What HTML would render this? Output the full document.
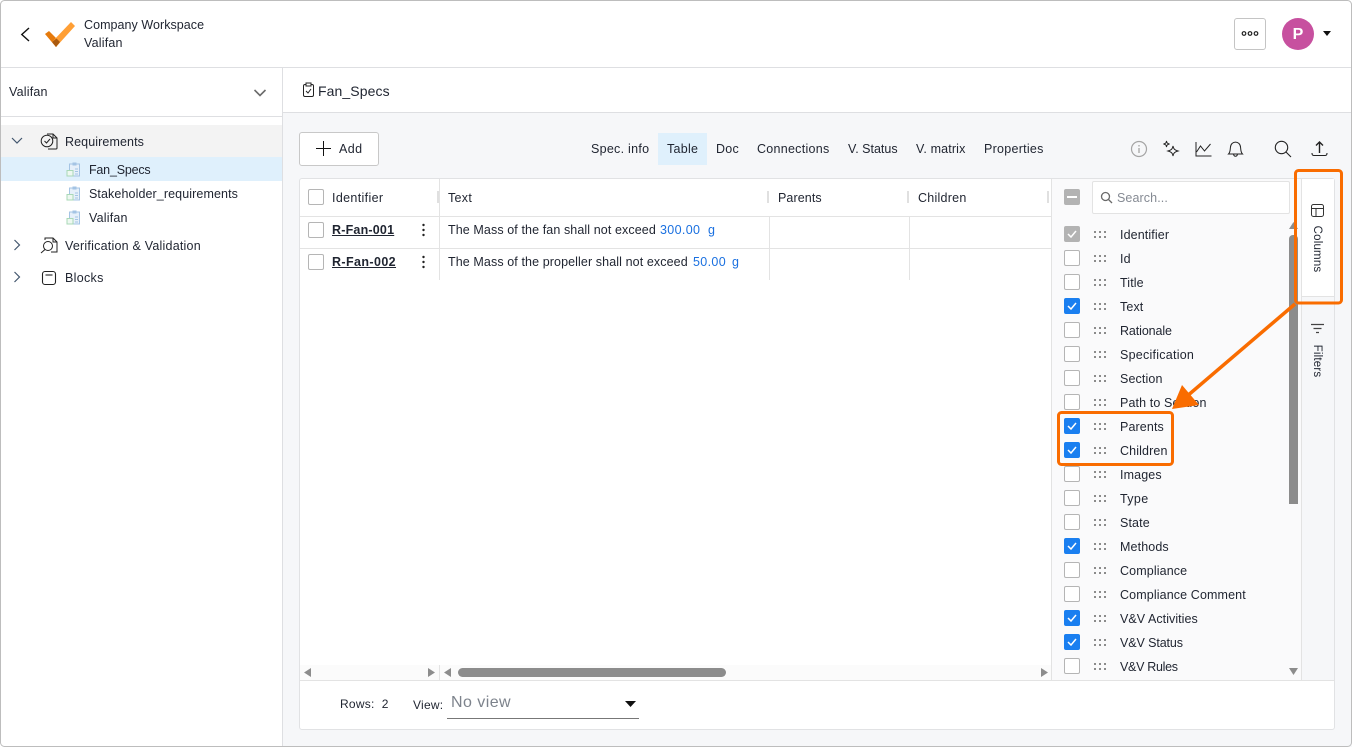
<!DOCTYPE html>
<html><head><meta charset="utf-8"><style>
html,body{margin:0;padding:0;background:#fff}
#r{position:relative;width:1352px;height:747px;overflow:hidden;background:#fff;font-family:"Liberation Sans",sans-serif;font-size:12.5px;color:#1f2430}
#r div,#r span.a,#r svg{position:absolute}
.t{white-space:nowrap;line-height:16px;letter-spacing:.1px}
.tb{letter-spacing:.27px}
.cb{width:14px;height:14px;border:1px solid #b5b5b5;border-radius:2px;background:#fff;left:1064px}
.on{background:#1a7ff0;border-color:#1a7ff0}
.gr{background:#b3b3b3;border-color:#b3b3b3}
.cb svg{left:2px;top:3px}
.l{left:1120px;letter-spacing:.12px}
.d{left:1094px;width:12px;height:7px;background-image:radial-gradient(circle at 1px 1px,#666 .8px,transparent 1px);background-size:5px 5px}
</style></head><body><div id="r">
<div style="left:0;top:0;width:1352px;height:67px;background:#fff;border-bottom:1px solid #dedfe2"></div>
<div style="left:283px;top:68px;width:1069px;height:44px;background:#fff;border-bottom:1px solid #dedfe2"></div>
<div style="left:283px;top:113px;width:1069px;height:634px;background:#f6f7f9"></div>
<div style="left:282px;top:68px;width:1px;height:679px;background:#dedfe2"></div>
<div style="left:0;top:116px;width:282px;height:1px;background:#dedfe2"></div>

<svg style="left:18px;top:25px" width="16" height="18" viewBox="0 0 16 18"><path d="M11 3L3.800 9.500 11 16" fill="none" stroke="#111" stroke-width="1.400"/></svg>
<svg style="left:44px;top:21px" width="32" height="27" viewBox="0 0 32 27"><path d="M1 13l4-3 11 11-4 5z" fill="#e57a0c"/><path d="M27 1l4 4-19 21-4-5z" fill="#ff9f35"/><path d="M12 26l4-5-3.500-3.500L8 21z" fill="#a95a10"/></svg>
<div class="t" style="left:84px;top:17px;letter-spacing:.05px">Company Workspace</div>
<div class="t" style="left:84px;top:35px;letter-spacing:.2px">Valifan</div>
<div style="left:1234px;top:18px;width:30px;height:30px;border:1px solid #c4c4c4;border-radius:3px"></div>
<svg style="left:1241px;top:30px" width="18" height="7"><g fill="none" stroke="#222" stroke-width="1.200"><circle cx="3" cy="3.500" r="1.800"/><circle cx="9" cy="3.500" r="1.800"/><circle cx="15" cy="3.500" r="1.800"/></g></svg>
<div style="left:1282px;top:18px;width:32px;height:32px;border-radius:50%;background:#c7509f;color:#fff;font-size:16px;font-weight:bold;text-align:center;line-height:33px">P</div>
<svg style="left:1322px;top:30px" width="10" height="7"><path d="M1 1h8L5 6z" fill="#111"/></svg>

<div class="t" style="left:9px;top:84px;letter-spacing:.2px">Valifan</div>
<svg style="left:252px;top:87px" width="16" height="12"><path d="M2.500 3l5.500 5.500L13.500 3" fill="none" stroke="#6b6b6b" stroke-width="1.600"/></svg>

<div style="left:1px;top:125px;width:281px;height:32px;background:#f3f3f3"></div>
<div style="left:1px;top:157px;width:281px;height:24px;background:#dff0fc"></div>
<svg style="left:10px;top:135px" width="14" height="12"><path d="M2 3l5 5 5-5" fill="none" stroke="#42566e" stroke-width="1.200"/></svg>
<svg style="left:11px;top:238px" width="12" height="14"><path d="M3.500 2l5 5-5 5" fill="none" stroke="#42566e" stroke-width="1.200"/></svg>
<svg style="left:11px;top:270px" width="12" height="14"><path d="M3.500 2l5 5-5 5" fill="none" stroke="#42566e" stroke-width="1.200"/></svg>
<svg style="left:40px;top:132px" width="18" height="18" viewBox="0 0 18 18" fill="none" stroke="#222" stroke-width="1"><path d="M7 2h6l4 4v10a1 1 0 0 1-1 1H8"/><path d="M13 2v4h4"/><circle cx="7" cy="9" r="5.800" fill="#f3f3f3"/><path d="M4.500 9l2 2 3.500-4"/></svg>
<svg style="left:40px;top:236px" width="18" height="18" viewBox="0 0 18 18" fill="none" stroke="#222" stroke-width="1"><path d="M5 4V2h8l4 4v10H11"/><path d="M13 2v4h4"/><circle cx="8" cy="10" r="4.500" fill="#fff"/><path d="M5 13.500L1 17"/></svg>
<svg style="left:41px;top:270px" width="16" height="16" viewBox="0 0 16 16" fill="none" stroke="#222" stroke-width="1.100"><rect x="1.500" y="1.500" width="13" height="13" rx="2.500"/><path d="M4.500 5h7"/></svg>
<svg style="left:66px;top:162px" width="15" height="15" viewBox="0 0 15 15"><rect x="3.500" y="2" width="10" height="12" fill="#e6f0fa" stroke="#a4c4e4"/><rect x="6.500" y="0.500" width="4" height="3" fill="#a4c4e4"/><rect x="1" y="8.500" width="6" height="5.500" fill="#eef8f1" stroke="#a9d8b7"/><path d="M9 7h3M9 9.500h3M9 12h3" stroke="#a4c4e4"/></svg>
<svg style="left:66px;top:186px" width="15" height="15" viewBox="0 0 15 15"><rect x="3.500" y="2" width="10" height="12" fill="#e6f0fa" stroke="#a4c4e4"/><rect x="6.500" y="0.500" width="4" height="3" fill="#a4c4e4"/><rect x="1" y="8.500" width="6" height="5.500" fill="#eef8f1" stroke="#a9d8b7"/><path d="M9 7h3M9 9.500h3M9 12h3" stroke="#a4c4e4"/></svg>
<svg style="left:66px;top:210px" width="15" height="15" viewBox="0 0 15 15"><rect x="3.500" y="2" width="10" height="12" fill="#e6f0fa" stroke="#a4c4e4"/><rect x="6.500" y="0.500" width="4" height="3" fill="#a4c4e4"/><rect x="1" y="8.500" width="6" height="5.500" fill="#eef8f1" stroke="#a9d8b7"/><path d="M9 7h3M9 9.500h3M9 12h3" stroke="#a4c4e4"/></svg>
<div class="t" style="left:65px;top:134px">Requirements</div>
<div class="t" style="left:89px;top:162px;letter-spacing:-.2px">Fan_Specs</div>
<div class="t" style="left:89px;top:186px">Stakeholder_requirements</div>
<div class="t" style="left:89px;top:210px;letter-spacing:.2px">Valifan</div>
<div class="t" style="left:65px;top:238px;letter-spacing:.22px">Verification &amp; Validation</div>
<div class="t" style="left:65px;top:270px;letter-spacing:.3px">Blocks</div>

<svg style="left:302px;top:82px" width="13" height="16" viewBox="0 0 13 16" fill="none" stroke="#222"><rect x="1.500" y="2.500" width="10" height="12" rx="1.500"/><rect x="4" y="1" width="5" height="3" fill="#fff"/><path d="M4 9l2 2 3-4"/></svg>
<div class="t" style="left:318px;top:83px;font-size:14px;letter-spacing:.1px">Fan_Specs</div>

<div style="left:299px;top:132px;width:78px;height:32px;border:1px solid #c8c8c8;border-radius:3px;background:#fff"></div>
<svg style="left:316px;top:141px" width="16" height="16"><path d="M7.500 0v15M0 7.500h15" stroke="#111" stroke-width="1"/></svg>
<div class="t" style="left:339px;top:141px;letter-spacing:.4px">Add</div>

<div style="left:658px;top:133px;width:49px;height:32px;background:#dff0fc"></div>
<div class="t tb" style="left:591px;top:141px">Spec. info</div>
<div class="t tb" style="left:667px;top:141px">Table</div>
<div class="t tb" style="left:716px;top:141px">Doc</div>
<div class="t tb" style="left:757px;top:141px">Connections</div>
<div class="t tb" style="left:848px;top:141px;letter-spacing:.0px">V. Status</div>
<div class="t tb" style="left:916px;top:141px;letter-spacing:.15px">V. matrix</div>
<div class="t tb" style="left:984px;top:141px">Properties</div>

<svg style="left:1130px;top:140px" width="18" height="18" fill="none"><circle cx="9" cy="9" r="7.500" stroke="#a5a5a5" stroke-width="1.200"/><path d="M9 8v5M9 5v1.500" stroke="#a5a5a5" stroke-width="1.300"/></svg>
<svg style="left:1162px;top:140px" width="18" height="18" fill="none" stroke="#222" stroke-width="1"><path d="M11 6c.5 3 1.500 4 5 5-3.500 1-4.500 2-5 5-.5-3-1.500-4-5-5 3.500-1 4.500-2 5-5z"/><path d="M4.500 1c.3 2 .8 2.500 3 3-2.200.5-2.700 1-3 3-.3-2-.8-2.500-3-3 2.200-.5 2.700-1 3-3z"/></svg>
<svg style="left:1195px;top:140px" width="18" height="18" fill="none" stroke="#222" stroke-width="1"><path d="M1 2v14h15.500"/><path d="M1.500 12l4-6 4 5 6-7"/></svg>
<svg style="left:1227px;top:140px" width="17" height="18" fill="none" stroke="#222" stroke-width="1"><path d="M1.500 14c2-2 1.500-4 2-7 .5-6.500 9.500-6.500 10 0 .5 3 0 5 2 7z"/><path d="M6.500 14c.5 3 3.500 3 4 0"/></svg>
<svg style="left:1274px;top:140px" width="18" height="18" fill="none" stroke="#222" stroke-width="1.100"><circle cx="7.500" cy="7.500" r="6.200"/><path d="M12 12l5 5"/></svg>
<svg style="left:1311px;top:140px" width="17" height="17" fill="none" stroke="#222" stroke-width="1.100"><path d="M8.500 13V2M5 5.500L8.500 2 12 5.500" stroke-width="1.400"/><path d="M1 13c0 2 .5 2.500 2 2.500h11c1.500 0 2-.5 2-2.500"/></svg>

<div style="left:299px;top:178px;width:1034px;height:550px;background:#fff;border:1px solid #e1e2e4;border-radius:3px"></div>
<div style="left:300px;top:216px;width:751px;height:1px;background:#e3e3e3"></div>
<div style="left:300px;top:248px;width:751px;height:1px;background:#e3e3e3"></div>
<div style="left:439px;top:179px;width:1px;height:101px;background:#e3e3e3"></div>
<div style="left:769px;top:217px;width:1px;height:63px;background:#e3e3e3"></div>
<div style="left:909px;top:217px;width:1px;height:63px;background:#e3e3e3"></div>
<div style="left:437px;top:191px;width:2px;height:12px;background:#e0e0e0"></div>
<div style="left:767px;top:191px;width:2px;height:12px;background:#e0e0e0"></div>
<div style="left:907px;top:191px;width:2px;height:12px;background:#e0e0e0"></div>
<div style="left:1047px;top:191px;width:2px;height:12px;background:#e0e0e0"></div>

<div class="cb" style="left:308px;top:189px"></div>
<div class="cb" style="left:308px;top:222px"></div>
<div class="cb" style="left:308px;top:254px"></div>
<div class="t" style="left:332px;top:190px;letter-spacing:.35px">Identifier</div>
<div class="t" style="left:448px;top:190px;letter-spacing:.3px">Text</div>
<div class="t" style="left:778px;top:190px">Parents</div>
<div class="t" style="left:918px;top:190px;letter-spacing:.25px">Children</div>
<div class="t" style="left:332px;top:222px;font-weight:bold;text-decoration:underline;letter-spacing:.2px">R-Fan-001</div>
<div class="t" style="left:332px;top:254px;font-weight:bold;text-decoration:underline;letter-spacing:.4px">R-Fan-002</div>
<svg style="left:421px;top:223px" width="5" height="14" fill="#222"><circle cx="2.500" cy="2" r="1.200"/><circle cx="2.500" cy="7" r="1.200"/><circle cx="2.500" cy="12" r="1.200"/></svg>
<svg style="left:421px;top:255px" width="5" height="14" fill="#222"><circle cx="2.500" cy="2" r="1.200"/><circle cx="2.500" cy="7" r="1.200"/><circle cx="2.500" cy="12" r="1.200"/></svg>
<div class="t" style="left:448px;top:222px">The Mass of the fan shall not exceed</div>
<div class="t" style="left:660px;top:222px;color:#1a70e0;letter-spacing:.35px">300.00</div>
<div class="t" style="left:708px;top:222px;color:#1a70e0">g</div>
<div class="t" style="left:448px;top:254px">The Mass of the propeller shall not exceed</div>
<div class="t" style="left:693px;top:254px;color:#1a70e0;letter-spacing:.35px">50.00</div>
<div class="t" style="left:732px;top:254px;color:#1a70e0">g</div>

<div style="left:300px;top:665px;width:751px;height:15px;background:#fbfbfb"></div>
<div style="left:439px;top:665px;width:1px;height:15px;background:#e3e3e3"></div>
<svg style="left:304px;top:668px" width="8" height="10"><path d="M7 0v9L0 4.500z" fill="#8c8c8c"/></svg>
<svg style="left:427px;top:668px" width="8" height="10"><path d="M1 0v9l7-4.500z" fill="#8c8c8c"/></svg>
<svg style="left:444px;top:668px" width="8" height="10"><path d="M7 0v9L0 4.500z" fill="#8c8c8c"/></svg>
<svg style="left:1040px;top:668px" width="8" height="10"><path d="M1 0v9l7-4.500z" fill="#8c8c8c"/></svg>
<div style="left:458px;top:668px;width:268px;height:9px;background:#8c8c8c;border-radius:5px"></div>
<div style="left:300px;top:680px;width:1034px;height:1px;background:#e3e3e3"></div>

<div class="t" style="left:340px;top:696px;font-size:12px;letter-spacing:.25px">Rows:&nbsp; 2</div>
<div class="t" style="left:413px;top:697px;font-size:12px;letter-spacing:.25px">View:</div>
<div class="t" style="left:451px;top:695px;font-size:16px;color:#7d838c;letter-spacing:.45px">No view</div>
<svg style="left:624px;top:700px" width="13" height="8"><path d="M1 1h11L6.500 7z" fill="#111"/></svg>
<div style="left:447px;top:718px;width:192px;height:1px;background:#777"></div>

<div style="left:1051px;top:179px;width:250px;height:501px;background:#fafafb;border-left:1px solid #e3e3e3"></div>
<div style="left:1301px;top:179px;width:1px;height:501px;background:#e3e3e3"></div>
<div style="left:1302px;top:179px;width:32px;height:501px;background:#f6f7f9"></div>
<div style="left:1302px;top:179px;width:32px;height:118px;background:#fff"></div>
<div style="left:1302px;top:296px;width:32px;height:1px;background:#e3e3e3"></div>

<div style="left:1092px;top:181px;width:196px;height:31px;background:#fff;border:1px solid #e3e3e3;border-radius:2px"></div>
<svg style="left:1100px;top:191px" width="13" height="13" fill="none" stroke="#6a6a6a" stroke-width="1.300"><circle cx="5.500" cy="5.500" r="4"/><path d="M8.500 8.500L12 12"/></svg>
<div class="t" style="left:1117px;top:190px;color:#858a93">Search...</div>
<div class="cb gr" style="top:189px"><div style="left:2px;top:6px;width:10px;height:2px;background:#fff"></div></div>

<div class="cb gr" style="top:226px"><svg width="10" height="8"><path d="M1 4l3 3 5-6" fill="none" stroke="#fff" stroke-width="1.500"/></svg></div>
<div class="cb" style="top:250px"></div><div class="cb" style="top:274px"></div>
<div class="cb on" style="top:298px"><svg width="10" height="8"><path d="M1 4l3 3 5-6" fill="none" stroke="#fff" stroke-width="1.500"/></svg></div>
<div class="cb" style="top:322px"></div><div class="cb" style="top:346px"></div><div class="cb" style="top:370px"></div><div class="cb" style="top:394px"></div>
<div class="cb on" style="top:418px"><svg width="10" height="8"><path d="M1 4l3 3 5-6" fill="none" stroke="#fff" stroke-width="1.500"/></svg></div>
<div class="cb on" style="top:442px"><svg width="10" height="8"><path d="M1 4l3 3 5-6" fill="none" stroke="#fff" stroke-width="1.500"/></svg></div>
<div class="cb" style="top:466px"></div><div class="cb" style="top:490px"></div><div class="cb" style="top:514px"></div>
<div class="cb on" style="top:538px"><svg width="10" height="8"><path d="M1 4l3 3 5-6" fill="none" stroke="#fff" stroke-width="1.500"/></svg></div>
<div class="cb" style="top:562px"></div><div class="cb" style="top:586px"></div>
<div class="cb on" style="top:610px"><svg width="10" height="8"><path d="M1 4l3 3 5-6" fill="none" stroke="#fff" stroke-width="1.500"/></svg></div>
<div class="cb on" style="top:634px"><svg width="10" height="8"><path d="M1 4l3 3 5-6" fill="none" stroke="#fff" stroke-width="1.500"/></svg></div>
<div class="cb" style="top:658px"></div>

<div class="d" style="top:231px"></div><div class="d" style="top:255px"></div><div class="d" style="top:279px"></div><div class="d" style="top:303px"></div><div class="d" style="top:327px"></div><div class="d" style="top:351px"></div><div class="d" style="top:375px"></div><div class="d" style="top:399px"></div><div class="d" style="top:423px"></div><div class="d" style="top:447px"></div><div class="d" style="top:471px"></div><div class="d" style="top:495px"></div><div class="d" style="top:519px"></div><div class="d" style="top:543px"></div><div class="d" style="top:567px"></div><div class="d" style="top:591px"></div><div class="d" style="top:615px"></div><div class="d" style="top:639px"></div><div class="d" style="top:663px"></div>

<div class="t l" style="top:227px">Identifier</div>
<div class="t l" style="top:251px">Id</div>
<div class="t l" style="top:275px">Title</div>
<div class="t l" style="top:299px">Text</div>
<div class="t l" style="top:323px;letter-spacing:-.1px">Rationale</div>
<div class="t l" style="top:347px;letter-spacing:.25px">Specification</div>
<div class="t l" style="top:371px">Section</div>
<div class="t l" style="top:395px">Path to Section</div>
<div class="t l" style="top:419px">Parents</div>
<div class="t l" style="top:443px">Children</div>
<div class="t l" style="top:467px">Images</div>
<div class="t l" style="top:491px;letter-spacing:.35px">Type</div>
<div class="t l" style="top:515px">State</div>
<div class="t l" style="top:539px">Methods</div>
<div class="t l" style="top:563px">Compliance</div>
<div class="t l" style="top:587px">Compliance Comment</div>
<div class="t l" style="top:611px;letter-spacing:.05px">V&amp;V Activities</div>
<div class="t l" style="top:635px;letter-spacing:-.1px">V&amp;V Status</div>
<div class="t l" style="top:659px;letter-spacing:-.3px">V&amp;V Rules</div>

<svg style="left:1288px;top:221px" width="11" height="9"><path d="M1 8h9L5.500 1z" fill="#8c8c8c"/></svg>
<div style="left:1289px;top:235px;width:9px;height:269px;background:#8c8c8c;border-radius:4px 4px 0 0"></div>
<svg style="left:1288px;top:667px" width="11" height="9"><path d="M1 1h9L5.500 8z" fill="#8c8c8c"/></svg>

<svg style="left:1310px;top:203px" width="15" height="15" fill="none" stroke="#333" stroke-width="1"><rect x="1.500" y="1.500" width="12" height="12" rx="2"/><path d="M1.500 5.500h12M6 5.500v8"/></svg>
<div class="t" style="left:1280px;top:241px;width:74px;text-align:center;transform:rotate(90deg);font-size:11.500px;letter-spacing:.2px">Columns</div>
<svg style="left:1310px;top:323px" width="15" height="12" stroke="#444" stroke-width="1.200"><path d="M1 1.500h13M3.500 5.500h8M6 9.500h3"/></svg>
<div class="t" style="left:1280px;top:353px;width:74px;text-align:center;transform:rotate(90deg);font-size:11.500px;letter-spacing:.2px">Filters</div>

<svg style="left:0;top:0" width="1352" height="747" fill="none">
<rect x="1295.500" y="170.500" width="46" height="132.500" rx="3" stroke="#f96c00" stroke-width="3"/>
<rect x="1058.500" y="412.500" width="114" height="52" rx="3" stroke="#f96c00" stroke-width="3"/>
<path d="M1295 304L1186 397" stroke="#f96c00" stroke-width="3.500"/>
<path d="M1172 409L1182 385L1199 405z" fill="#f96c00"/>
<rect x=".5" y=".5" width="1351" height="746" rx="4" stroke="#bdbdbd"/>
</svg>
</div></body></html>
